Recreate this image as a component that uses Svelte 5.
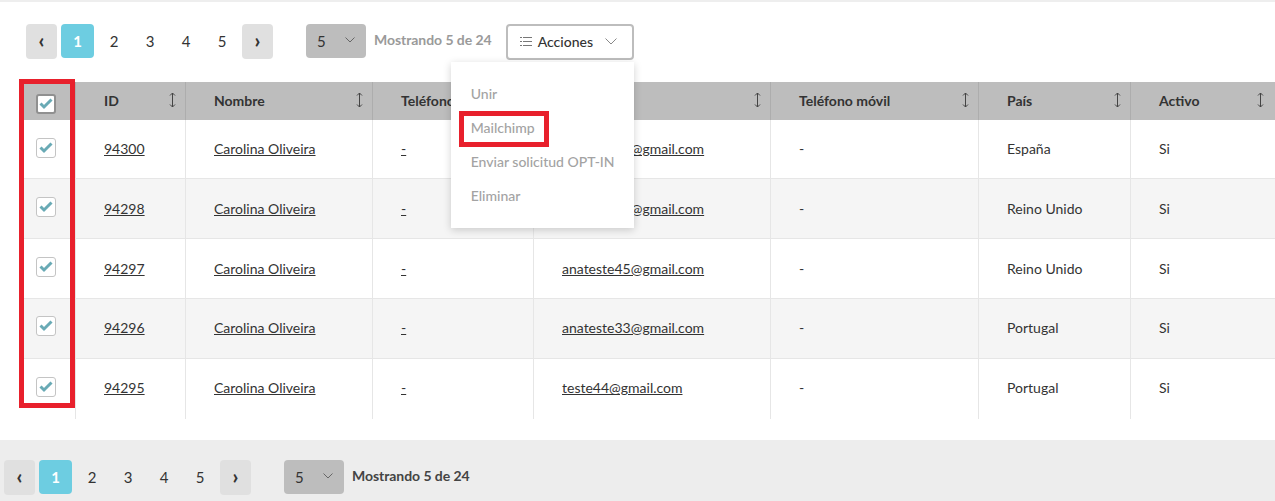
<script lang="ts">
	const pages = [1, 2, 3, 4, 5];
	const actions = ['Unir', 'Mailchimp', 'Enviar solicitud OPT-IN', 'Eliminar'];
	const columns = ['ID', 'Nombre', 'Teléfono', 'Email', 'Teléfono móvil', 'País', 'Activo'];

	const rows = [
		{ id: 94300, phone: '-', email: 'anateste50@gmail.com', country: 'España' },
		{ id: 94298, phone: '-', email: 'anateste46@gmail.com', country: 'Reino Unido' },
		{ id: 94297, phone: '-', email: 'anateste45@gmail.com', country: 'Reino Unido' },
		{ id: 94296, phone: '-', email: 'anateste33@gmail.com', country: 'Portugal' },
		{ id: 94295, phone: '-', email: 'teste44@gmail.com', country: 'Portugal' }
	];
</script>

{#snippet pager()}
	<div class="pager">
		<button class="arrow">‹</button>
		{#each pages as page}
			<button class="page" class:active={page === 1}>{page}</button>
		{/each}
		<button class="arrow next">›</button>
	</div>
	<div class="per-page">
		<span>5</span>
		<svg width="10" height="6" viewBox="0 0 10 6" fill="none" stroke="#666" stroke-width="1"><polyline points="0.5 0.5 5 5 9.5 0.5" /></svg>
	</div>
{/snippet}

{#snippet check(head)}
	<span class="check" class:head>
		<svg width="14" height="12" viewBox="0 0 14 12" fill="none" stroke="#69aab5" stroke-width="3"><polyline points="1.5 5.5 5 9 12.5 1.5" /></svg>
	</span>
{/snippet}

{#snippet sortIcon()}
	<svg class="sort" width="7" height="16" viewBox="0 0 7 16" fill="none" stroke="#444" stroke-width="1">
		<line x1="3.5" y1="1" x2="3.5" y2="15" />
		<polyline points="1 3.5 3.5 1 6 3.5" />
		<polyline points="1 12.5 3.5 15 6 12.5" />
	</svg>
{/snippet}

<div class="screen">
	<div class="toolbar">
		{@render pager()}
		<span class="count muted">Mostrando 5 de 24</span>
		<div class="actions-wrap">
			<button class="actions">
				<svg width="12" height="9" viewBox="0 0 12 9" fill="none" stroke="#777" stroke-width="1">
					<line x1="0" y1="0.5" x2="2" y2="0.5" /><line x1="3" y1="0.5" x2="12" y2="0.5" />
					<line x1="0" y1="4.5" x2="2" y2="4.5" /><line x1="3" y1="4.5" x2="12" y2="4.5" />
					<line x1="0" y1="8.5" x2="2" y2="8.5" /><line x1="3" y1="8.5" x2="12" y2="8.5" />
				</svg>
				<span>Acciones</span>
				<svg class="caret" width="12" height="7" viewBox="0 0 12 7" fill="none" stroke="#888" stroke-width="1"><polyline points="0.5 0.5 6 6 11.5 0.5" /></svg>
			</button>
			<ul class="menu">
				{#each actions as action}
					<li class:marked={action === 'Mailchimp'}>{action}</li>
				{/each}
			</ul>
		</div>
	</div>

	<div class="table-wrap">
		<table>
			<colgroup>
				<col style="width: 51px" />
				<col style="width: 110px" />
				<col style="width: 187px" />
				<col style="width: 161px" />
				<col style="width: 237px" />
				<col style="width: 208px" />
				<col style="width: 152px" />
				<col />
			</colgroup>
			<thead>
				<tr>
					<th class="sel">{@render check(true)}</th>
					{#each columns as col}
						<th><div class="th-inner"><span>{col}</span>{@render sortIcon()}</div></th>
					{/each}
				</tr>
			</thead>
			<tbody>
				{#each rows as row}
					<tr>
						<td class="sel">{@render check(false)}</td>
						<td><a href="#top">{row.id}</a></td>
						<td><a href="#top">Carolina Oliveira</a></td>
						<td><a href="#top">{row.phone}</a></td>
						<td><a href="#top">{row.email}</a></td>
						<td>-</td>
						<td>{row.country}</td>
						<td>Si</td>
					</tr>
				{/each}
			</tbody>
		</table>
		<div class="red-box"></div>
	</div>

	<div class="footer">
		{@render pager()}
		<span class="count">Mostrando 5 de 24</span>
	</div>
</div>

<style>
	:global(body) {
		margin: 0;
		background: #fff;
	}

	.screen {
		height: 501px;
		overflow: hidden;
		border-top: 2px solid #eeeeee;
		box-sizing: border-box;
		font-family: Lato, 'Liberation Sans', sans-serif;
		font-size: 14px;
		color: #333;
	}

	.toolbar {
		display: flex;
		align-items: flex-start;
		height: 80px;
		padding: 22px 0 0 26px;
		box-sizing: border-box;
	}

	.pager {
		display: flex;
		align-items: flex-start;
	}

	.pager button {
		border: none;
		padding: 0;
		font-family: inherit;
		font-size: 15px;
		color: #333;
		background: transparent;
		border-radius: 4px;
		height: 34px;
	}

	.pager .arrow {
		width: 31px;
		height: 35px;
		padding-bottom: 4px;
		background: #e0e0e0;
		font-size: 20px;
		font-weight: 900;
		line-height: 26px;
		margin-right: 4px;
	}

	.pager .next {
		margin: 0 0 0 2px;
	}

	.pager .page {
		width: 36px;
	}

	.pager .page.active {
		width: 33px;
		margin-right: 2px;
		background: #6dcde1;
		color: #fff;
		font-weight: 700;
	}

	.per-page {
		display: flex;
		align-items: center;
		justify-content: space-between;
		box-sizing: border-box;
		width: 60px;
		height: 34px;
		margin-left: 33px;
		padding: 0 11px;
		background: #bdbdbd;
		border-radius: 4px;
		font-size: 15px;
	}

	.per-page svg {
		margin-bottom: 2px;
	}

	.count {
		margin: 7px 0 0 8px;
		font-weight: 500;
		line-height: 18px;
		letter-spacing: -0.05px;
	}

	.count.muted {
		color: #9a9a9a;
		font-weight: 700;
		font-size: 14px;
	}

	.actions-wrap {
		position: relative;
		margin-left: 14px;
	}

	.actions {
		display: flex;
		align-items: center;
		box-sizing: border-box;
		width: 128px;
		height: 36px;
		padding: 0 15px 2px 12px;
		background: #fff;
		border: 2px solid #bdbdbd;
		border-radius: 4px;
		font-family: inherit;
		font-size: 14px;
		font-weight: 500;
		color: #333;
	}

	.actions span {
		margin-left: 6px;
	}

	.actions .caret {
		margin-left: auto;
	}

	.menu {
		position: absolute;
		z-index: 2;
		top: 38px;
		left: -55px;
		width: 183px;
		height: 166px;
		box-sizing: border-box;
		margin: 0;
		padding: 15px 20px;
		list-style: none;
		background: #fff;
		box-shadow: 0 2px 8px rgba(0, 0, 0, 0.18);
		color: #a3a3a3;
		font-weight: 500;
	}

	.menu li {
		position: relative;
		height: 34px;
		line-height: 34px;
		white-space: nowrap;
	}

	.menu li.marked::after {
		content: '';
		position: absolute;
		left: -12px;
		top: 0;
		width: 90px;
		height: 36px;
		box-sizing: border-box;
		border: 5px solid #e8202c;
	}

	.table-wrap {
		position: relative;
		box-sizing: border-box;
		height: 358px;
		padding-left: 24px;
	}

	table {
		width: 100%;
		table-layout: fixed;
		border-collapse: collapse;
	}

	th {
		height: 38px;
		padding: 0 9px 2px 28.5px;
		box-sizing: border-box;
		background: #bdbdbd;
		border-right: 1px solid #adadad;
		font-weight: 700;
		text-align: left;
		color: #333;
	}

	th:last-child,
	td:last-child {
		border-right: none;
	}

	th:last-child {
		padding-right: 11px;
	}

	.th-inner {
		display: flex;
		align-items: center;
		justify-content: space-between;
	}

	.sort {
		flex-shrink: 0;
	}

	td {
		height: 60px;
		padding: 0 0 0 28.5px;
		border-right: 1px solid #e6e6e6;
		border-bottom: 1px solid #e6e6e6;
		box-sizing: border-box;
		white-space: nowrap;
	}

	tbody tr:first-child td {
		height: 58px;
	}

	tbody tr:nth-child(even) td {
		background: #f5f5f5;
	}

	tbody tr:nth-child(n + 4) td {
		padding-bottom: 2px;
	}

	tbody tr:last-child td {
		height: 61px;
		border-bottom: none;
	}

	th.sel,
	td.sel {
		padding: 0 0 0 12px;
	}

	a {
		color: #333;
		text-decoration: underline;
	}

	.check {
		display: flex;
		align-items: center;
		justify-content: center;
		box-sizing: border-box;
		width: 20px;
		height: 20px;
		margin-bottom: 2px;
		background: #fff;
		border: 1px solid #c4c4c4;
		border-radius: 3px;
	}

	.check.head {
		margin: 6px 0 0;
		border: 2px solid #909090;
	}

	.red-box {
		position: absolute;
		left: 19px;
		top: -3px;
		width: 56px;
		height: 329px;
		box-sizing: border-box;
		border: 5px solid #e8202c;
		pointer-events: none;
	}

	.footer {
		display: flex;
		align-items: flex-start;
		height: 61px;
		padding: 20px 0 0 4px;
		box-sizing: border-box;
		background: #ededed;
	}

	.footer .count {
		font-weight: 700;
		color: #444;
	}
</style>
